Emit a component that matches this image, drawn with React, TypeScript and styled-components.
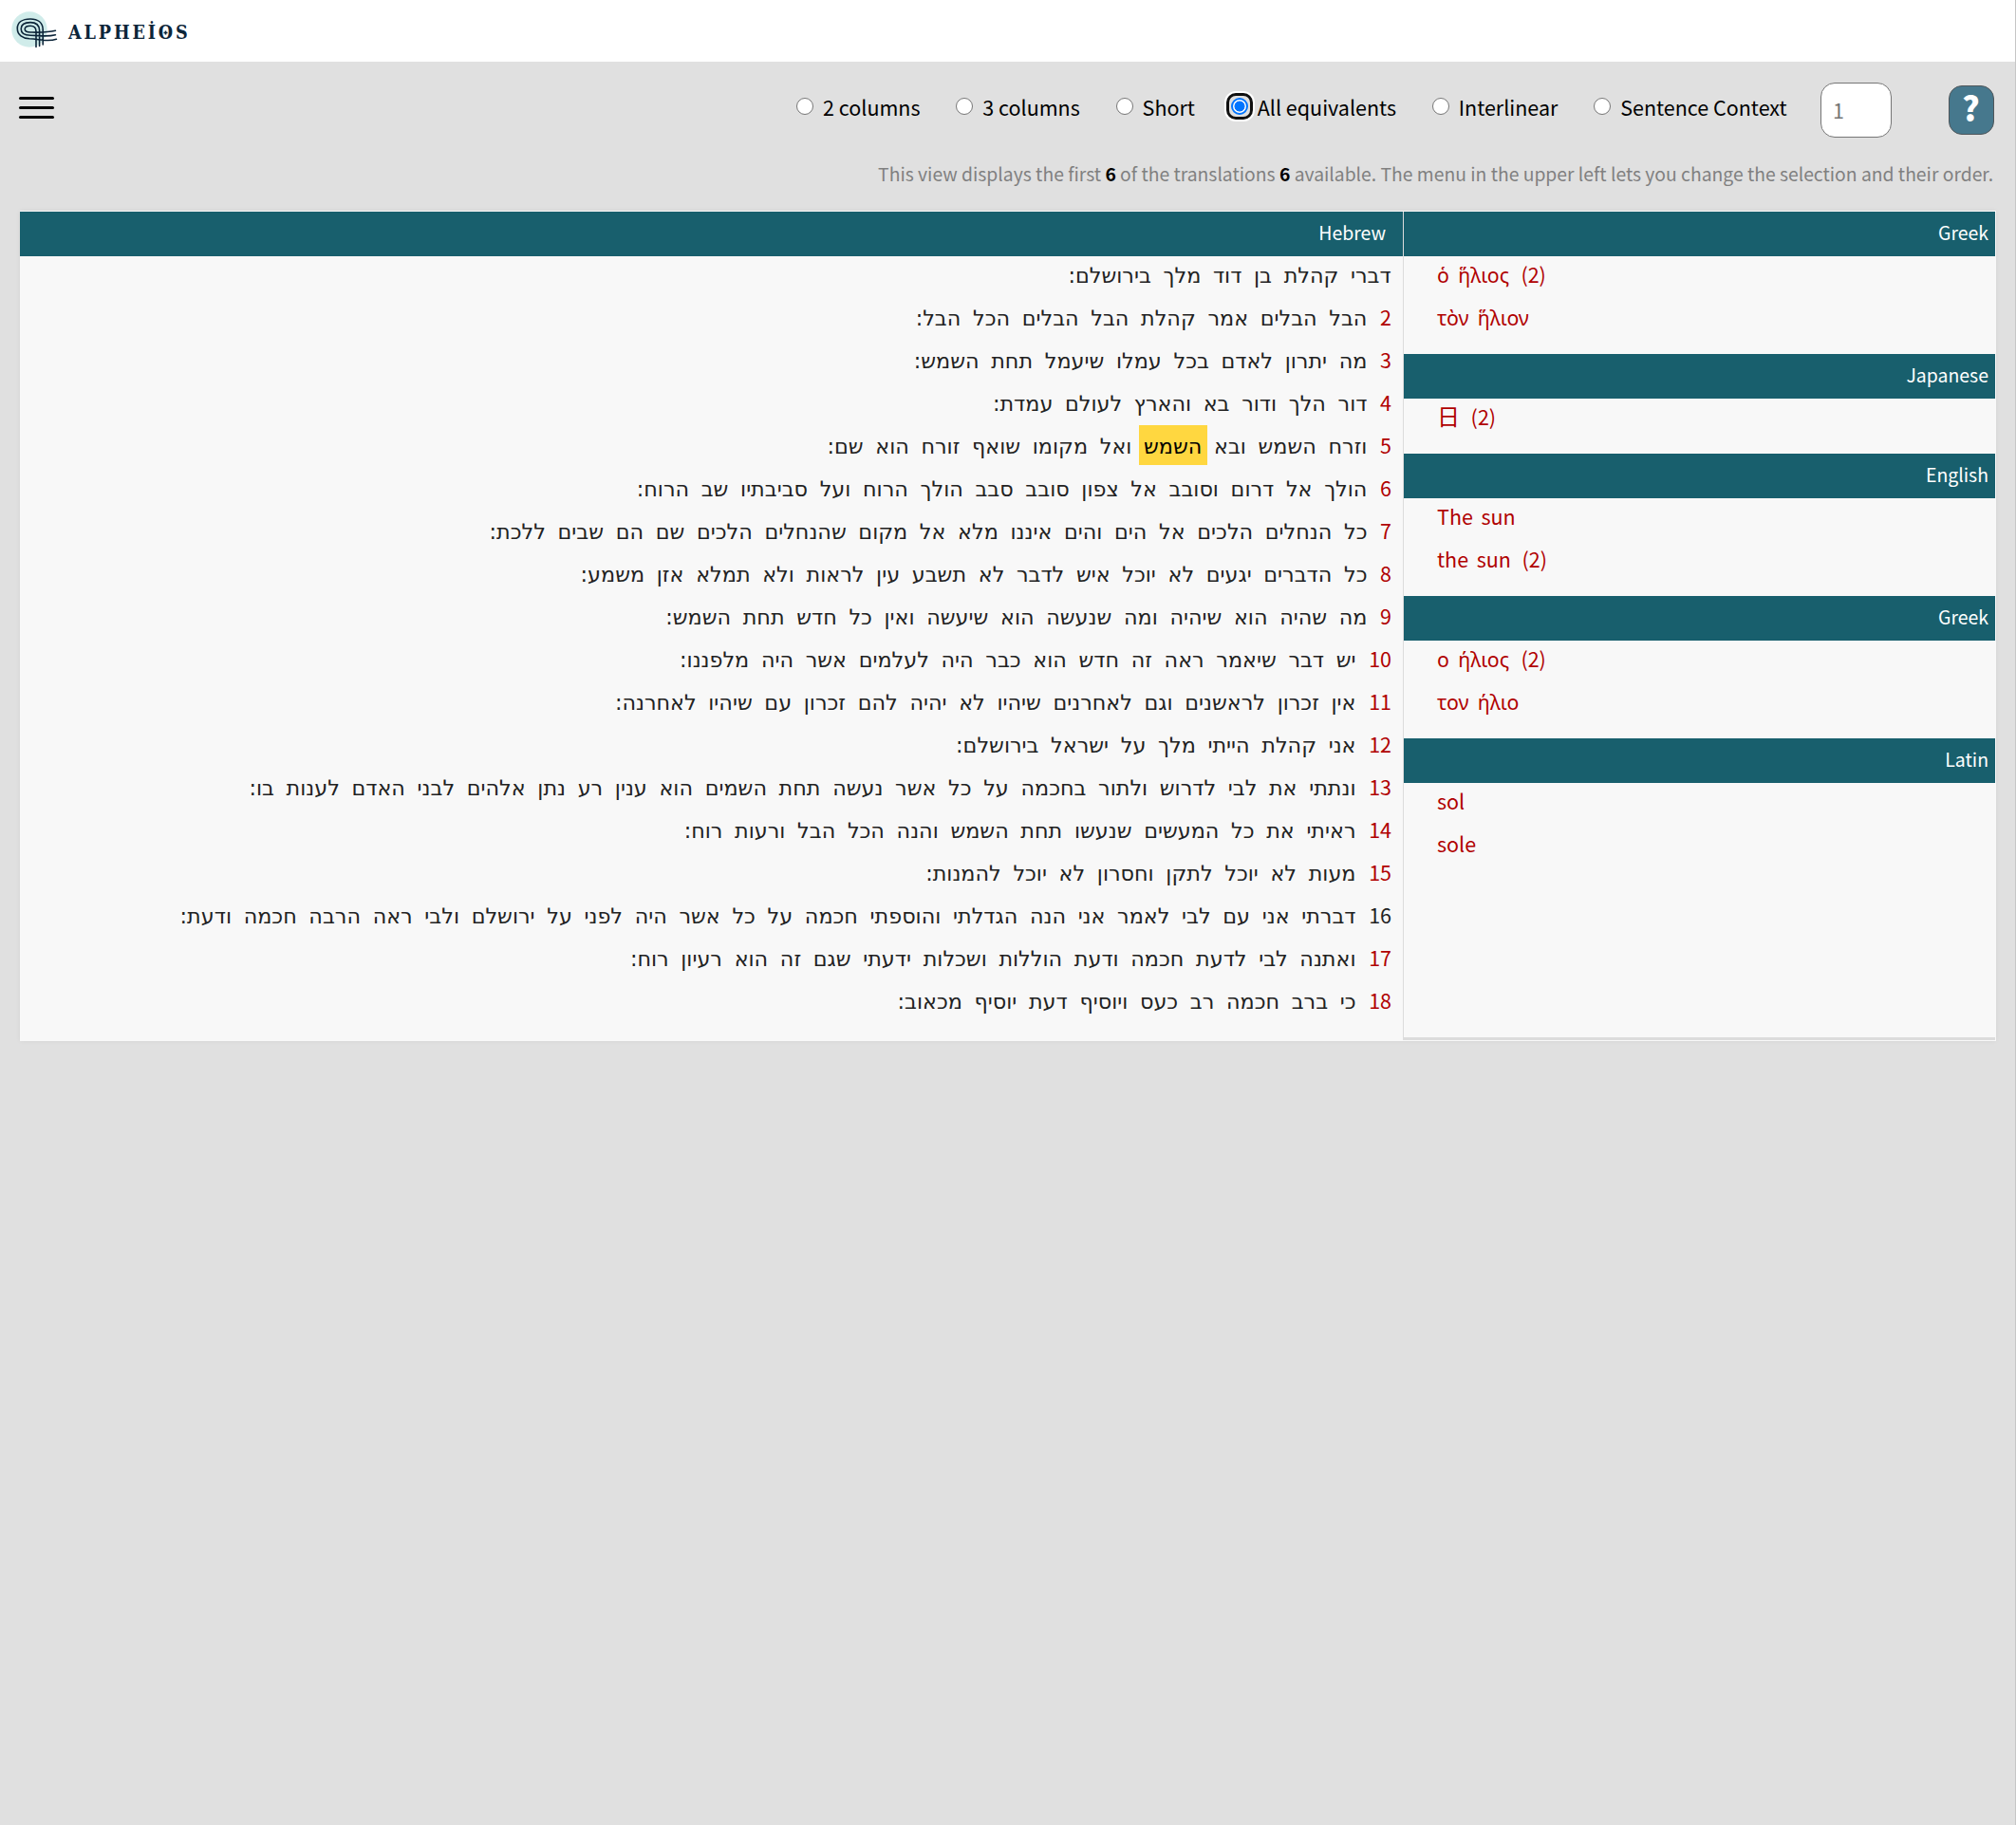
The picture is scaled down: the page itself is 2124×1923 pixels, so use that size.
import React, { useState } from "react";
import styled, { createGlobalStyle } from "styled-components";

const sans = `"Noto Sans CJK JP", "Noto Sans", sans-serif`;
const red = "#b00000";
const teal = "#185f6d";

const GlobalStyle = createGlobalStyle`
  * { box-sizing: border-box; }
  body { margin: 0; background: #e0e0e0; font-family: ${sans}; }
`;

const Page = styled.div`
  min-height: 1923px;
  border-right: 1px solid #c6c6c6;
`;

const TopBar = styled.header`
  height: 65px;
  padding-left: 9px;
  background: #fff;
  display: flex;
`;

const Mark = styled.svg`
  width: 53px;
  height: 65px;
  flex: none;
`;

const Wordmark = styled.div`
  margin: 21px 0 0 10px;
  display: flex;
  gap: 2.85px;
  font: bold 19.6px/28px "DejaVu Serif", serif;
  font-stretch: condensed;
  color: #0c2539;
`;

const Letter = styled.span`
  position: relative;
`;

const InnerCross = styled.svg`
  position: absolute;
  left: 50%;
  top: 10.5px;
  width: 5px;
  height: 5px;
  margin-left: -2.5px;
`;

const Toolbar = styled.div`
  height: 94px;
  padding: 22px 22px 0 20px;
  display: flex;
  align-items: flex-start;
`;

const Hamburger = styled.button`
  width: 37px;
  margin: 14.7px auto 0 0;
  padding: 0;
  border: 0;
  background: none;
  display: flex;
  flex-direction: column;
  gap: 6.9px;
`;

const Bar = styled.span`
  height: 3.3px;
  width: 37px;
  border-radius: 2px;
  background: #000;
`;

const Options = styled.div`
  display: flex;
  gap: 37.8px;
  margin-top: 5px;
`;

const Option = styled.label`
  display: flex;
  align-items: center;
  gap: 10px;
  height: 42px;
  font-size: 21.5px;
  line-height: 42px;
  color: #000;
  white-space: nowrap;
`;

const RadioSlot = styled.span<{ $focused: boolean }>`
  display: flex;
  padding: 2px;
  margin: -4px -2px -2px;
  border-radius: 7px;
  box-shadow: ${(p) => (p.$focused ? "0 0 0 3px #101010, 0 0 0 5px #fff" : "none")};
`;

const Radio = styled.input`
  appearance: none;
  width: 18px;
  height: 18px;
  margin: 0;
  border: 1.5px solid #767676;
  border-radius: 50%;
  background: #fff;

  &:checked {
    border: 2px solid #0075ff;
    background: radial-gradient(circle, #0075ff 5.2px, #fff 5.8px);
  }
`;

const SentenceInput = styled.input`
  width: 75px;
  height: 58px;
  margin: 0 60px 0 35.4px;
  padding: 0 12px 2px;
  border: 1px solid #767676;
  border-radius: 15px;
  background: #fff;
  font: 21.5px ${sans};
  color: #757575;
`;

const HelpButton = styled.button`
  width: 48px;
  height: 52px;
  margin-top: 3px;
  padding: 0 1px 7px 0;
  border: 1px solid #50565a;
  border-radius: 14px;
  background: #46788d;
  color: #fff;
  font: 900 35px/43px ${sans};
`;

const Notice = styled.p`
  margin: 0;
  height: 63px;
  padding: 4px 23px 0 0;
  text-align: right;
  font-size: 19.32px;
  line-height: 40px;
  color: #808080;

  b { color: #000; }
`;

const Panel = styled.main`
  width: 2082px;
  height: 875px;
  margin-left: 21px;
  padding: 1px 1px 1px 0;
  display: grid;
  grid-template-columns: 1457px 1fr;
  background: #f8f8f8;
  box-shadow: 0 0 5px rgba(0, 0, 0, 0.06);
`;

const Equivalents = styled.aside`
  border-left: 1px solid #dcdcdc;
  border-bottom: 3px solid #dcdcdc;
`;

const LanguageBar = styled.h2<{ $inset: number }>`
  margin: 0;
  height: 47px;
  padding-right: ${(p) => p.$inset}px;
  background: ${teal};
  color: #fff;
  text-align: right;
  font-size: 19.45px;
  font-weight: 400;
  line-height: 43px;
`;

const Verse = styled.div`
  direction: rtl;
  height: 45px;
  padding-right: 7px;
  display: flex;
  align-items: flex-start;
  gap: 2px;
`;

const Word = styled.span<{ $selected?: boolean }>`
  height: 42px;
  margin-top: -2px;
  padding: 2px 5.33px 0;
  font: 22.3px/40px "DejaVu Sans", sans-serif;
  white-space: nowrap;
  color: ${(p) => (p.$selected ? "#000" : "#222")};
  background: ${(p) => (p.$selected ? "#ffd740" : "transparent")};
`;

const VerseNumber = styled.span<{ $plain: boolean }>`
  height: 42px;
  margin-top: -2px;
  padding: 0 5px 0 6.3px;
  font-size: 21.5px;
  line-height: 42px;
  color: ${(p) => (p.$plain ? "#222" : red)};
`;

const Group = styled.section`
  padding-bottom: 13px;
`;

type Script = "greek" | "cjk" | "latin";

const Phrase = styled.div<{ $script: Script }>`
  height: 45px;
  padding-left: 35px;
  display: flex;
  align-items: baseline;
  gap: ${(p) => (p.$script === "greek" ? 9.3 : 8.6)}px;
  color: ${red};
  font-size: ${(p) => ({ greek: 21.3, cjk: 24, latin: 21.5 })[p.$script]}px;
  font-family: ${(p) => (p.$script === "greek" ? `"Noto Sans", sans-serif` : sans)};
  line-height: ${(p) => ({ greek: 39, cjk: 35, latin: 37 })[p.$script]}px;
`;

const Count = styled.span`
  margin-left: 3px;
  font: 21.5px/36px ${sans};
`;

const modes = ["2 columns", "3 columns", "Short", "All equivalents", "Interlinear", "Sentence Context"];

const verses = [
  "דברי קהלת בן דוד מלך בירושלם:",
  "הבל הבלים אמר קהלת הבל הבלים הכל הבל:",
  "מה יתרון לאדם בכל עמלו שיעמל תחת השמש:",
  "דור הלך ודור בא והארץ לעולם עמדת:",
  "וזרח השמש ובא השמש ואל מקומו שואף זורח הוא שם:",
  "הולך אל דרום וסובב אל צפון סובב סבב הולך הרוח ועל סביבתיו שב הרוח:",
  "כל הנחלים הלכים אל הים והים איננו מלא אל מקום שהנחלים הלכים שם הם שבים ללכת:",
  "כל הדברים יגעים לא יוכל איש לדבר לא תשבע עין לראות ולא תמלא אזן משמע:",
  "מה שהיה הוא שיהיה ומה שנעשה הוא שיעשה ואין כל חדש תחת השמש:",
  "יש דבר שיאמר ראה זה חדש הוא כבר היה לעלמים אשר היה מלפננו:",
  "אין זכרון לראשנים וגם לאחרנים שיהיו לא יהיה להם זכרון עם שיהיו לאחרנה:",
  "אני קהלת הייתי מלך על ישראל בירושלם:",
  "ונתתי את לבי לדרוש ולתור בחכמה על כל אשר נעשה תחת השמים הוא ענין רע נתן אלהים לבני האדם לענות בו:",
  "ראיתי את כל המעשים שנעשו תחת השמש והנה הכל הבל ורעות רוח:",
  "מעות לא יוכל לתקן וחסרון לא יוכל להמנות:",
  "דברתי אני עם לבי לאמר אני הנה הגדלתי והוספתי חכמה על כל אשר היה לפני על ירושלם ולבי ראה הרבה חכמה ודעת:",
  "ואתנה לבי לדעת חכמה ודעת הוללות ושכלות ידעתי שגם זה הוא רעיון רוח:",
  "כי ברב חכמה רב כעס ויוסיף דעת יוסיף מכאוב:",
];

const groups: { language: string; script: Script; phrases: [string, number?][] }[] = [
  { language: "Greek", script: "greek", phrases: [["ὁ ἥλιος", 2], ["τὸν ἥλιον"]] },
  { language: "Japanese", script: "cjk", phrases: [["日", 2]] },
  { language: "English", script: "latin", phrases: [["The sun"], ["the sun", 2]] },
  { language: "Greek", script: "greek", phrases: [["ο ήλιος", 2], ["τον ήλιο"]] },
  { language: "Latin", script: "latin", phrases: [["sol"], ["sole"]] },
];

const isSelected = (verse: number, word: number) => verse === 4 && word === 3;

function Logo() {
  return (
    <>
      <Mark viewBox="9 0 53 65" fill="none" stroke="#0c2539" strokeWidth="1.6" strokeLinecap="round">
        <circle cx="31" cy="31" r="18.7" fill="#d0ecea" stroke="none" />
        <path d="M45.2 47V31C45 24 40 20 32 20C23 20 18.3 24 18.3 30C18.3 37 24 40.5 31 40.8C41 41 50 44.5 59.4 41.2" />
        <path d="M41.6 48.5V32C41.4 26.5 38 23.6 32 23.6C26 23.6 22.2 26 22.2 30.5C22.2 35.5 27 37.2 32 37.3C42 37.4 50 39 58.4 36.7" />
        <path d="M38 49.5V33C38 29 35.5 27.2 32 27.2C28.5 27.2 26.2 28.5 26.2 30.8C26.2 33 28.5 33.9 32 34C42 34.2 50 34.5 58.4 32.3" />
      </Mark>
      <Wordmark>
        {"ALPHEİOS".split("").map((letter, i) => (
          <Letter key={i}>
            {letter}
            {letter === "O" && (
              <InnerCross viewBox="0 0 5 5">
                <path d="M2.5 0.5V4.5M0.5 2.5H4.5" stroke="#0c2539" strokeWidth="1.6" />
              </InnerCross>
            )}
          </Letter>
        ))}
      </Wordmark>
    </>
  );
}

export default function App() {
  const [mode, setMode] = useState("All equivalents");
  return (
    <Page>
      <GlobalStyle />
      <TopBar><Logo /></TopBar>
      <Toolbar>
        <Hamburger aria-label="Menu"><Bar /><Bar /><Bar /></Hamburger>
        <Options>
          {modes.map((name) => (
            <Option key={name}>
              <RadioSlot $focused={mode === name}>
                <Radio type="radio" name="mode" checked={mode === name} onChange={() => setMode(name)} />
              </RadioSlot>
              {name}
            </Option>
          ))}
        </Options>
        <SentenceInput defaultValue="1" />
        <HelpButton>?</HelpButton>
      </Toolbar>
      <Notice>
        This view displays the first <b>6</b> of the translations <b>6</b> available. The menu in the upper left lets you change the selection and their order.
      </Notice>
      <Panel>
        <section>
          <LanguageBar $inset={18}>Hebrew</LanguageBar>
          {verses.map((verse, v) => (
            <Verse key={v}>
              {v > 0 && <VerseNumber $plain={v === 15}>{v + 1}</VerseNumber>}
              {verse.split(" ").map((word, w) => (
                <Word key={w} $selected={isSelected(v, w)}>{word}</Word>
              ))}
            </Verse>
          ))}
        </section>
        <Equivalents>
          {groups.map(({ language, script, phrases }, g) => (
            <Group key={g}>
              <LanguageBar $inset={7}>{language}</LanguageBar>
              {phrases.map(([text, count], i) => (
                <Phrase key={i} $script={script}>
                  {text.split(" ").map((word) => <span key={word}>{word}</span>)}
                  {count && <Count>({count})</Count>}
                </Phrase>
              ))}
            </Group>
          ))}
        </Equivalents>
      </Panel>
    </Page>
  );
}
